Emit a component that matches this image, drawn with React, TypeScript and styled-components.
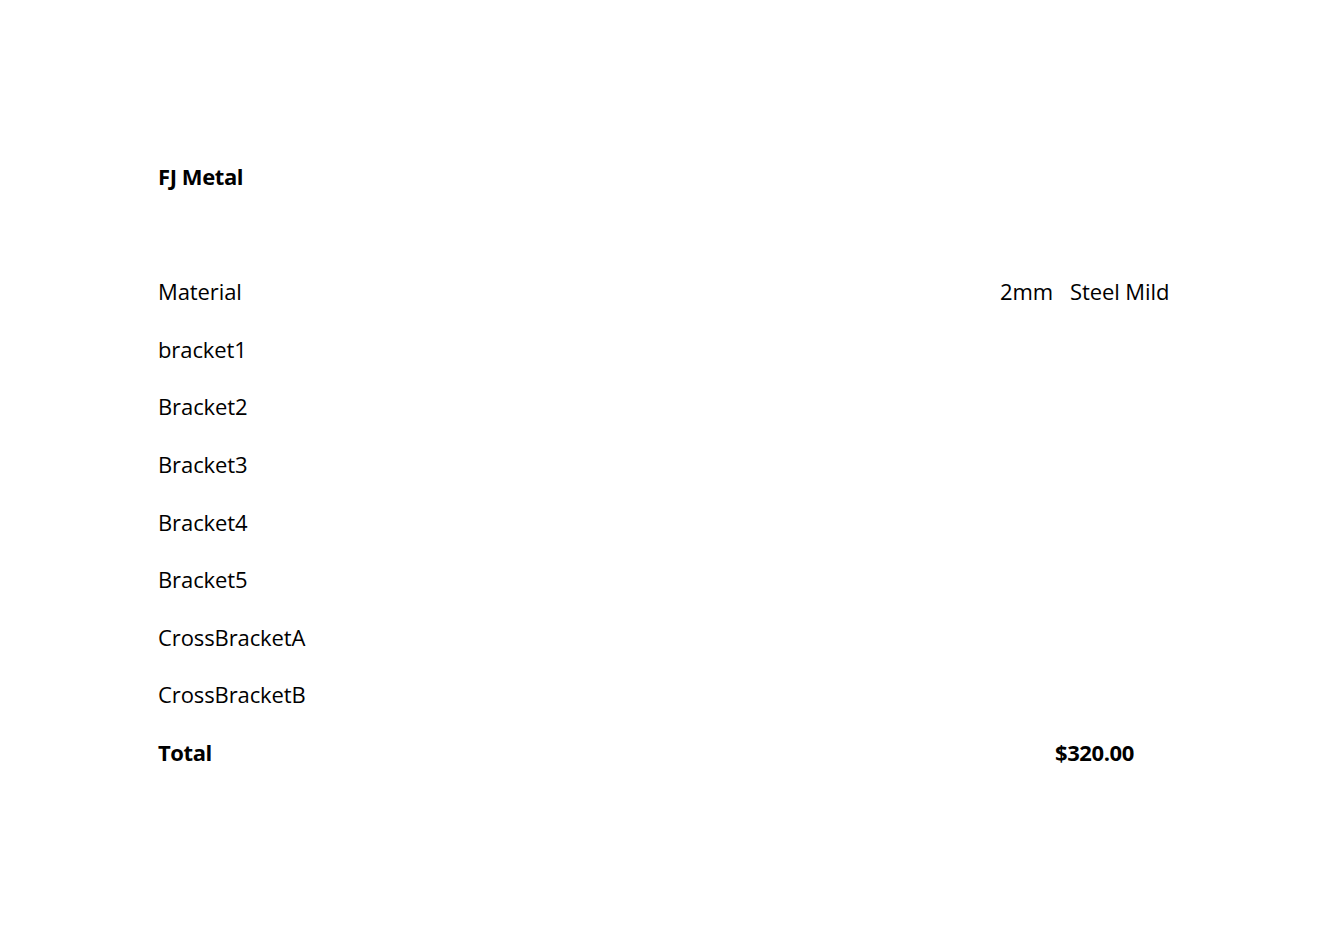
import React from "react";
import styled, { createGlobalStyle } from "styled-components";

const Global = createGlobalStyle`
  html, body { margin: 0; padding: 0; background: #fff; }
  body { font-family: "Open Sans", "Noto Sans", sans-serif; color: #000; }
`;

const Page = styled.div`
  width: 1333px;
  min-height: 943px;
  box-sizing: border-box;
  padding: 148px 0 0 158px;
`;

const Sheet = styled.div`
  display: grid;
  grid-template-columns: 842px 70px 140px;
  font-size: 22px;
  line-height: 57.6px;
  white-space: nowrap;
`;

const Cell = styled.div<{ $bold?: boolean; $span?: number; $offset?: number }>`
  font-weight: ${(p) => (p.$bold ? 700 : 400)};
  letter-spacing: ${(p) => (p.$bold ? "-0.4px" : "-0.1px")};
  grid-column: ${(p) => (p.$span ? `span ${p.$span}` : "auto")};
  padding-left: ${(p) => p.$offset ?? 0}px;
  height: 57.6px;
`;

const items = [
  "bracket1",
  "Bracket2",
  "Bracket3",
  "Bracket4",
  "Bracket5",
  "CrossBracketA",
  "CrossBracketB",
];

export default function App() {
  return (
    <>
      <Global />
      <Page>
        <Sheet>
          <Cell $bold $span={3}>FJ Metal</Cell>
          <Cell $span={3} />
          <Cell>Material</Cell>
          <Cell>2mm</Cell>
          <Cell>Steel Mild</Cell>
          {items.map((it) => (
            <Cell key={it} $span={3}>{it}</Cell>
          ))}
          <Cell $bold>Total</Cell>
          <Cell $bold $span={2} $offset={55}>$320.00</Cell>
        </Sheet>
      </Page>
    </>
  );
}
